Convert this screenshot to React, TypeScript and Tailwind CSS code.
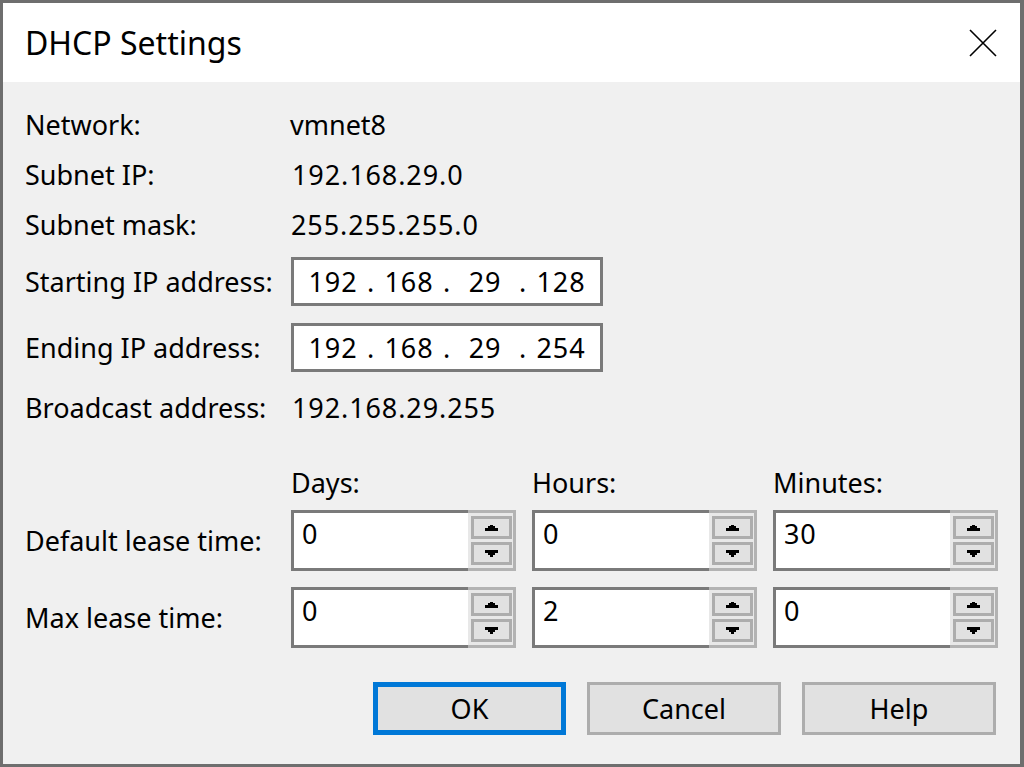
import React from 'react';

const font = "font-['Noto_Sans',sans-serif]";

const ArrowUp = () => (
  <svg width="13" height="6" viewBox="0 0 13 6" className="block">
    <path d="M5 0h3v1h2v2h3v3H0V3h3V1h2z" fill="#000" />
  </svg>
);

const ArrowDown = () => (
  <svg width="13" height="7" viewBox="0 0 13 7" className="block">
    <path d="M0 0h13v3h-3v2H8v2H5V5H3V3H0z" fill="#000" />
  </svg>
);

// Zahl-Feld mit Auf/Ab-Pfeilen
const Spin = ({ value }: { value: string }) => (
  <div className="flex h-[61px] w-[225px]">
    <div className="flex-1 border-[3px] border-r-0 border-[#7a7a7a] bg-white pl-[8px] pt-[3px] text-[27px] leading-[36px] tracking-[0.9px]">
      {value}
    </div>
    <div className="flex w-[48px] flex-col gap-[3px] border-[3px] border-l-0 border-[#b3b3b3] bg-[#e8e8e8] py-[3px] pl-[3px] pr-[1px]">
      <div className="flex h-[23px] items-center justify-center border-[3px] border-[#adadad] bg-[#e1e1e1]">
        <ArrowUp />
      </div>
      <div className="flex h-[23px] items-center justify-center border-[3px] border-[#adadad] bg-[#e1e1e1]">
        <ArrowDown />
      </div>
    </div>
  </div>
);

// IP-Adressfeld mit vier Teilen
const IpBox = ({ parts }: { parts: string[] }) => (
  <div className="flex h-[49px] w-[312px] items-center border-[3px] border-[#7a7a7a] bg-white pl-[9px] tracking-[0.9px]">
    {parts.map((p, i) => (
      <React.Fragment key={i}>
        <span className="w-[60px] text-center">{p}</span>
        {i < 3 && <span className="w-[16px] text-center">.</span>}
      </React.Fragment>
    ))}
  </div>
);

const Row = ({ label, children, className = '' }: { label: string; children: React.ReactNode; className?: string }) => (
  <div className={`flex items-center ${className}`}>
    <div className="w-[266px]">{label}</div>
    {children}
  </div>
);

const Btn = ({ label, focused }: { label: string; focused?: boolean }) => (
  <button
    className={`flex h-[53px] items-center justify-center bg-[#e1e1e1] ${
      focused ? 'w-[193px] border-[5px] border-[#0078d7]' : 'w-[194px] border-[3px] border-[#adadad]'
    }`}
  >
    {label}
  </button>
);

export default function App() {
  return (
    <div className={`flex h-[767px] w-[1024px] flex-col border-[3px] border-r-[4px] border-[#6e6e6e] bg-[#f0f0f0] text-black ${font}`}>
      {/* Titelleiste */}
      <div className="flex h-[79px] shrink-0 items-center justify-between bg-white pl-[22px] pr-[23px]">
        <span className="text-[32px] leading-none">DHCP Settings</span>
        <svg width="28" height="28" viewBox="0 0 28 28">
          <path d="M1 1L27 27M27 1L1 27" stroke="#000" strokeWidth="1.6" />
        </svg>
      </div>

      {/* Inhalt */}
      <div className="flex flex-col pl-[22px] pt-[17px] text-[27px] leading-none">
        <Row label="Network:" className="h-[50px]">
          <span className="-ml-[1px]">vmnet8</span>
        </Row>
        <Row label="Subnet IP:" className="h-[50px]">
          <span className="ml-[1px] tracking-[0.9px]">192.168.29.0</span>
        </Row>
        <Row label="Subnet mask:" className="h-[50px]">
          <span className="tracking-[0.9px]">255.255.255.0</span>
        </Row>
        <Row label="Starting IP address:" className="mt-[8px]">
          <IpBox parts={['192', '168', '29', '128']} />
        </Row>
        <Row label="Ending IP address:" className="mt-[17px]">
          <IpBox parts={['192', '168', '29', '254']} />
        </Row>
        <Row label="Broadcast address:" className="mt-[10px] h-[50px]">
          <span className="ml-[1px] tracking-[0.9px]">192.168.29.255</span>
        </Row>

        {/* Leasezeiten */}
        <div className="mt-[35px] flex h-[30px] items-center pl-[266px]">
          <span className="w-[241px]">Days:</span>
          <span className="w-[241px]">Hours:</span>
          <span>Minutes:</span>
        </div>
        <Row label="Default lease time:" className="mt-[13px]">
          <div className="flex gap-[16px]">
            <Spin value="0" />
            <Spin value="0" />
            <Spin value="30" />
          </div>
        </Row>
        <Row label="Max lease time:" className="mt-[16px]">
          <div className="flex gap-[16px]">
            <Spin value="0" />
            <Spin value="2" />
            <Spin value="0" />
          </div>
        </Row>

        {/* Schaltflächen */}
        <div className="mt-[34px] flex gap-[21px] pl-[348px]">
          <Btn label="OK" focused />
          <Btn label="Cancel" />
          <Btn label="Help" />
        </div>
      </div>
    </div>
  );
}
